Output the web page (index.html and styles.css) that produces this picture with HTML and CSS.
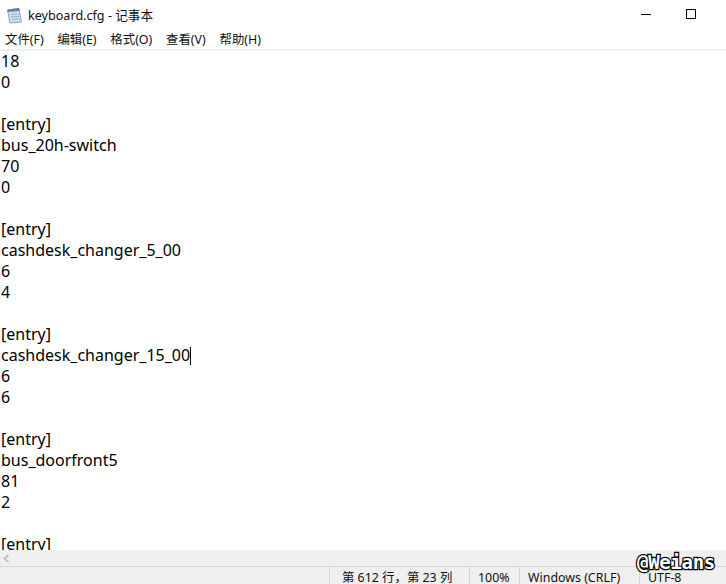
FILE: index.html
```html
<!DOCTYPE html>
<html lang="zh-CN">
<head>
<meta charset="utf-8">
<title>keyboard.cfg - 记事本</title>
<link rel="stylesheet" href="styles.css">
</head>
<body>
<div class="window">
  <header class="titlebar">
    <svg class="app-icon" width="17" height="17" viewBox="0 0 17 17">
      <path d="M1.5 3 L13 1.5 L15.5 15 L4 16 Z" fill="#cfe3ee" stroke="#8a9fae"/>
      <path d="M1.5 2.5 L13 1 L13.6 4 L2 5 Z" fill="#5f86a0"/>
      <path d="M4.5 7.5 L12.5 7 M5 10 L13 9.5 M5.5 12.5 L13.5 12" stroke="#8fb3c8"/>
    </svg>
    <span class="title">keyboard.cfg - 记事本</span>
    <div class="win-controls">
      <span class="win-min"></span>
      <span class="win-max"></span>
    </div>
  </header>
  <nav class="menubar">
    <span>文件(F)</span><span>编辑(E)</span><span>格式(O)</span><span>查看(V)</span><span>帮助(H)</span>
  </nav>
  <main class="editor"><div class="line">18</div><div class="line">0</div><div class="line">&nbsp;</div><div class="line">[entry]</div><div class="line">bus_20h-switch</div><div class="line">70</div><div class="line">0</div><div class="line">&nbsp;</div><div class="line">[entry]</div><div class="line">cashdesk_changer_5_00</div><div class="line">6</div><div class="line">4</div><div class="line">&nbsp;</div><div class="line">[entry]</div><div class="line">cashdesk_changer_15_00<span class="caret"></span></div><div class="line">6</div><div class="line">6</div><div class="line">&nbsp;</div><div class="line">[entry]</div><div class="line">bus_doorfront5</div><div class="line">81</div><div class="line">2</div><div class="line">&nbsp;</div><div class="line">[entry]</div></main>
  <div class="hscroll">
    <svg width="9" height="9" viewBox="0 0 9 9"><path d="M6.5 1 L2.5 4.5 L6.5 8" fill="none" stroke="#c4c4c4" stroke-width="2"/></svg>
  </div>
  <footer class="statusbar">
    <span class="cell cell-pos">第 612 行，第 23 列</span>
    <span class="cell cell-zoom">100%</span>
    <span class="cell cell-eol">Windows (CRLF)</span>
    <span class="cell cell-enc">UTF-8</span>
  </footer>
  <div class="watermark">@Weians</div>
</div>
</body>
</html>
```
FILE: styles.css
```css
* { box-sizing: border-box; }
html, body { margin: 0; height: 100%; overflow: hidden; background: #fff; }
.window {
  position: relative;
  width: 726px;
  height: 584px;
  display: flex;
  flex-direction: column;
  font-family: "Noto Sans", "Noto Sans CJK SC", sans-serif;
  color: #000;
  overflow: hidden;
}
.titlebar {
  height: 30px;
  flex: none;
  display: flex;
  align-items: center;
  padding-left: 6px;
  padding-bottom: 2px;
  gap: 5px;
}
.app-icon { flex: none; margin-top: 2px; }
.title { font-size: 12.6px; color: #111; }
.win-controls {
  margin-left: auto;
  display: flex;
  align-items: center;
  padding-right: 30px;
  gap: 35px;
  height: 28px;
}
.win-min { width: 10px; height: 1px; background: #000; }
.win-max { width: 10px; height: 10px; border: 1px solid #000; }
.menubar {
  height: 19px;
  flex: none;
  display: flex;
  gap: 13.8px;
  padding-left: 5px;
  font-size: 12.4px;
  line-height: 19px;
  color: #111;
}
.editor {
  flex: 1;
  min-height: 0;
  overflow: hidden;
  border-top: 2px solid #f0f0f0;
  padding-left: 1px;
  font-size: 16px;
  line-height: 21px;
  white-space: pre;
}
.line { height: 21px; }
.caret {
  display: inline-block;
  width: 1px;
  height: 18px;
  background: #000;
  vertical-align: -4px;
}
.hscroll {
  height: 17px;
  flex: none;
  background: #efefef;
  display: flex;
  align-items: center;
  padding-left: 2px;
  border-bottom: 1px solid #d6d6d6;
}
.statusbar {
  height: 17px;
  flex: none;
  background: #efefef;
  display: flex;
  padding-left: 329px;
  font-size: 12.4px;
  line-height: 22px;
  color: #111;
}
.cell { border-left: 1px solid #d6d6d6; padding-left: 8px; white-space: nowrap; }
.cell-pos { width: 140px; padding-left: 12px; }
.cell-zoom { width: 50px; }
.cell-eol { width: 120px; }
.cell-enc { flex: 1; }
.watermark {
  position: absolute;
  left: 637px;
  top: 552px;
  font-family: "DejaVu Sans Mono", monospace;
  font-size: 19px;
  font-weight: bold;
  line-height: 20px;
  letter-spacing: -0.3px;
  color: #fff;
  -webkit-text-stroke: 2.4px #000;
  paint-order: stroke fill;
}
```
